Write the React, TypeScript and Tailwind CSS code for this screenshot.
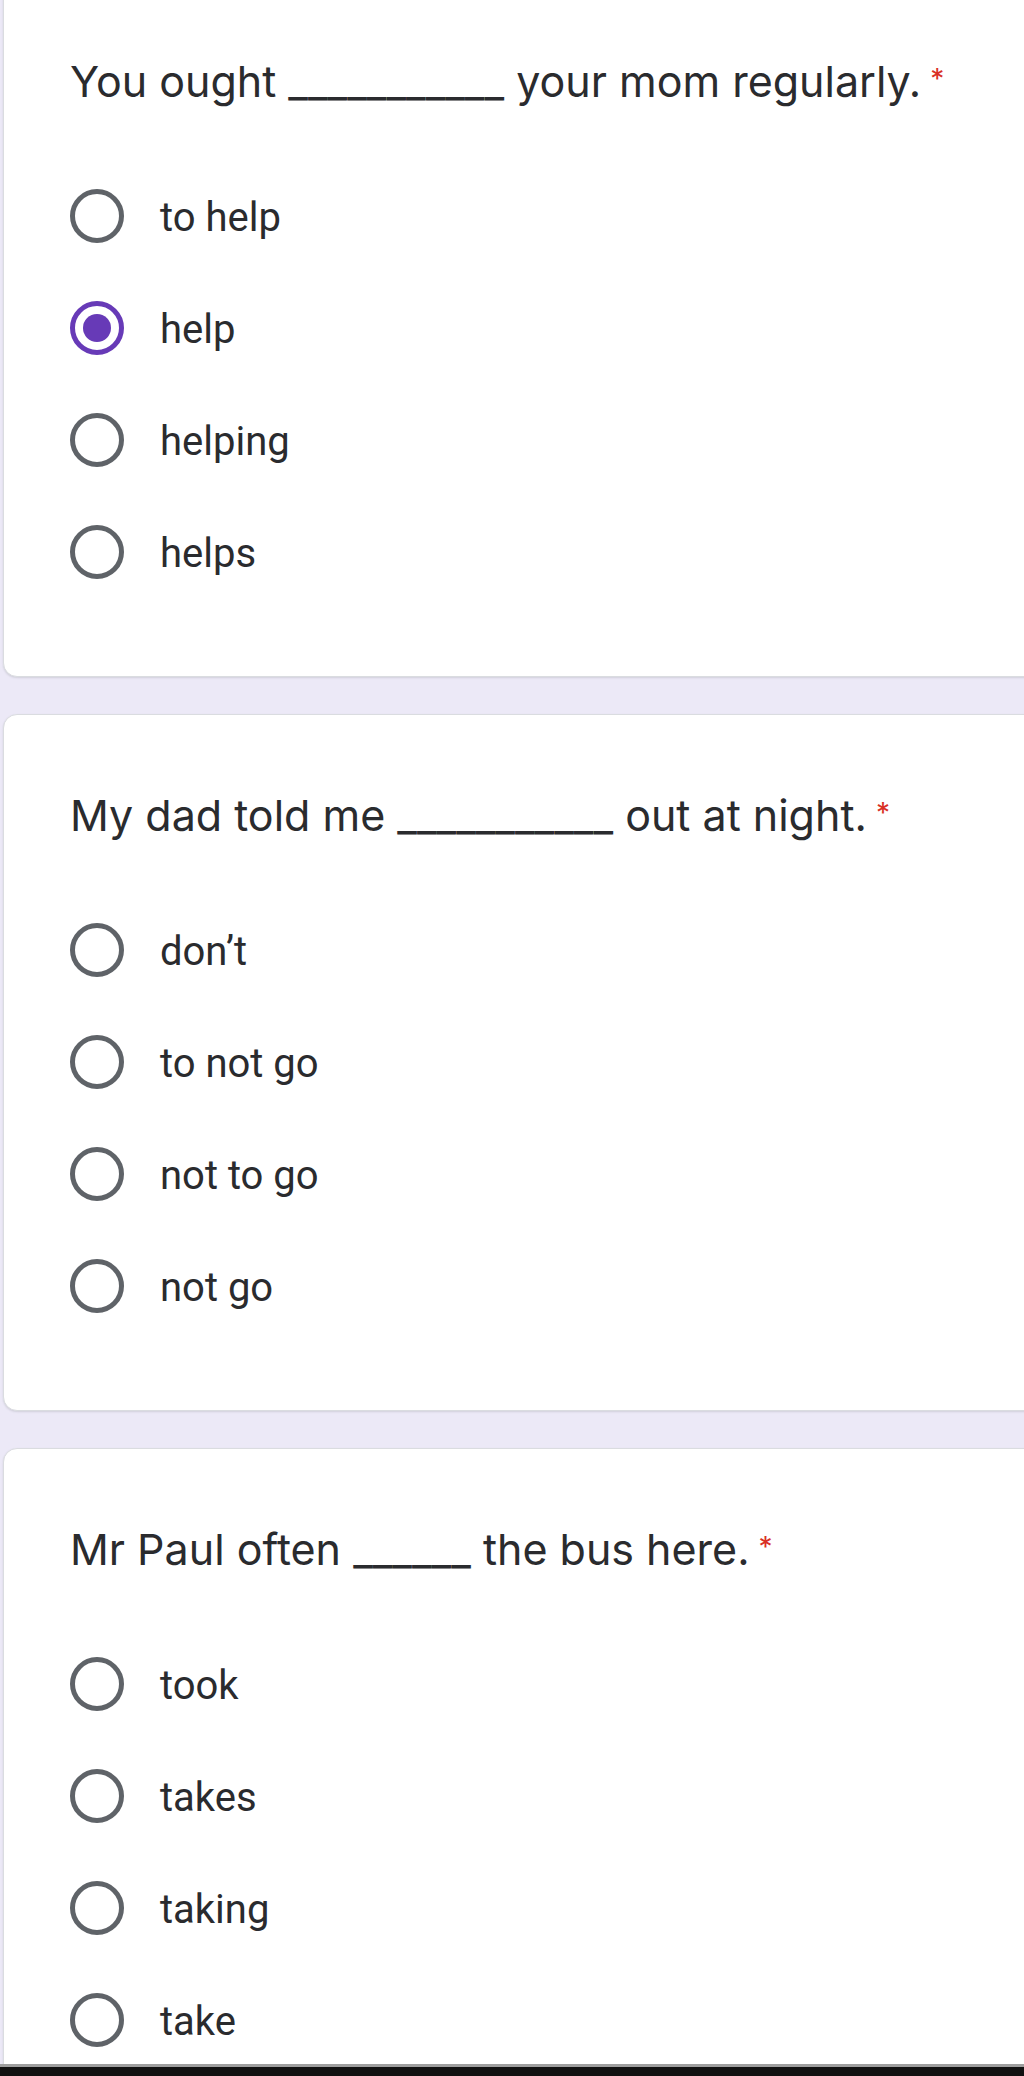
import React from 'react'

interface Question {
  id: string
  before: string
  blank: string
  after: string
  options: string[]
  selected?: string
}

const questions: Question[] = [
  {
    id: 'q1',
    before: 'You ought',
    blank: '___________',
    after: 'your mom regularly.',
    options: ['to help', 'help', 'helping', 'helps'],
    selected: 'help',
  },
  {
    id: 'q2',
    before: 'My dad told me',
    blank: '___________',
    after: 'out at night.',
    options: ["don’t", 'to not go', 'not to go', 'not go'],
  },
  {
    id: 'q3',
    before: 'Mr Paul often',
    blank: '______',
    after: 'the bus here.',
    options: ['took', 'takes', 'taking', 'take'],
  },
]

const Radio: React.FC<{ checked?: boolean }> = ({ checked }) => {
  if (checked) {
    return (
      <div className="w-[54px] h-[54px] shrink-0 rounded-full border-[5px] border-[#673ab7] flex items-center justify-center">
        <div className="w-[28px] h-[28px] rounded-full bg-[#673ab7]" />
      </div>
    )
  }
  return <div className="w-[54px] h-[54px] shrink-0 rounded-full border-[5px] border-[#5f6368]" />
}

export default function App() {
  return (
    <div className="relative h-[2076px] overflow-hidden bg-[#ece9f7] pl-[3px]">
      <div className="-mt-[20px] flex flex-col gap-[37px]">
        {questions.map((q) => (
          <div
            key={q.id}
            className="-mr-[30px] bg-white rounded-[14px] border border-[#dadce0] shadow-[0_1px_2px_rgba(60,64,67,0.15)] pl-[66px] pt-[76px] pb-[68px]"
          >
            {/* Question title */}
            <div className="h-[48px] flex items-center text-[43px] leading-none text-[#2a2b2e] whitespace-nowrap font-['Inter','Lato',sans-serif]">
              <span>
                {q.before} {q.blank} {q.after}
              </span>
              <span className="ml-[9px] mt-[8px] text-[28px] text-[#d93025] self-start">*</span>
            </div>

            {/* Options */}
            <div className="mt-[55px] flex flex-col">
              {q.options.map((opt) => (
                <div key={opt} className="h-[112px] flex items-center gap-[36px]">
                  <Radio checked={q.selected === opt} />
                  <span className="text-[40px] leading-none text-[#2a2b2e] font-['Roboto',sans-serif] mt-[3px]">
                    {opt}
                  </span>
                </div>
              ))}
            </div>
          </div>
        ))}
      </div>

      {/* bottom system bar */}
      <div className="absolute left-0 right-0 bottom-0 h-[12px] border-t-[3px] border-[#9e9e9e] bg-[#111111]" />
    </div>
  )
}
